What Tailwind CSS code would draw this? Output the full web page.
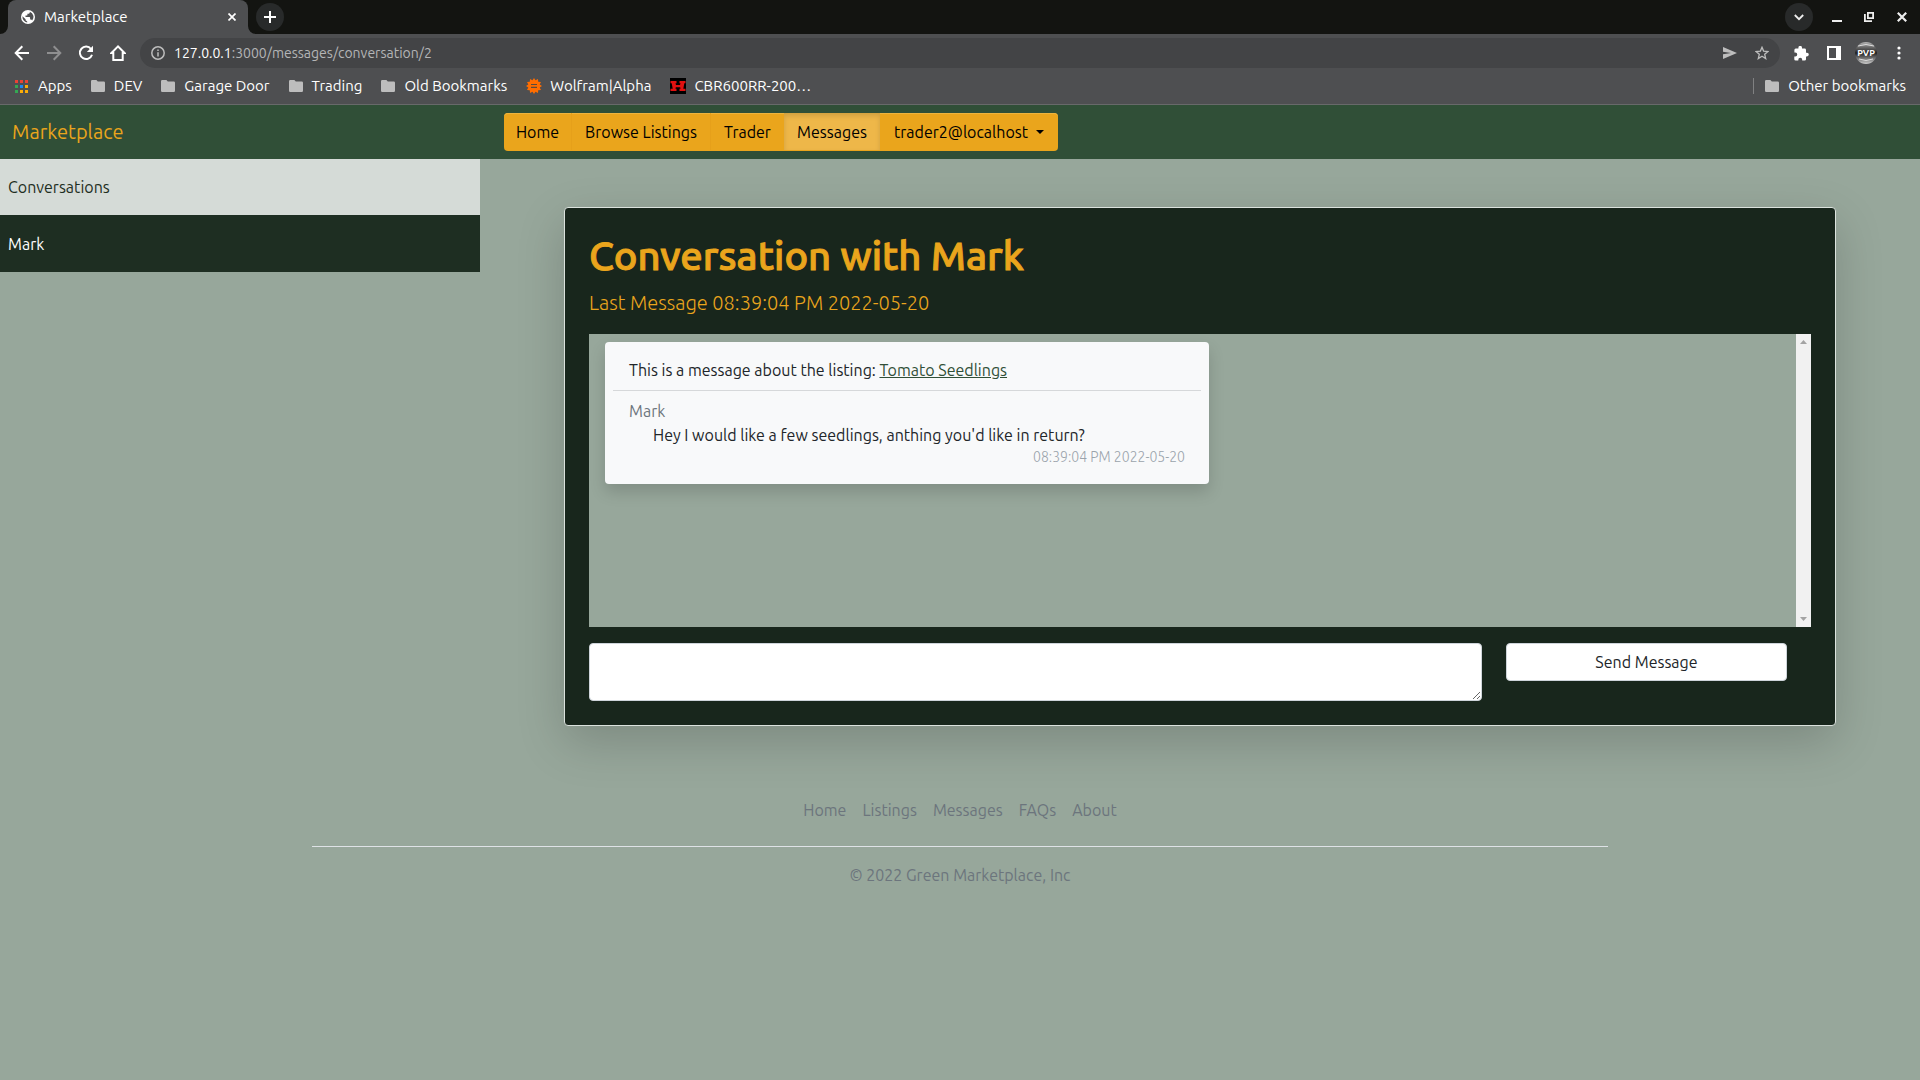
<!DOCTYPE html>
<html lang="en">
<head>
<meta charset="utf-8">
<meta name="viewport" content="width=device-width, initial-scale=1">
<title>Marketplace</title>
<script src="https://cdn.jsdelivr.net/npm/@tailwindcss/browser@4"></script>
</head>
<body class="min-h-screen bg-[#97a79b] font-['Ubuntu','Noto_Sans',sans-serif] text-base leading-6 text-[#212529]">

<svg class="hidden" aria-hidden="true">
  <symbol id="folder" viewBox="0 0 14 12"><path d="M1.200 0H5.400L6.800 1.500H12.800A1.200 1.200 0 0 1 14 2.700V10.800A1.200 1.200 0 0 1 12.800 12H1.200A1.200 1.200 0 0 1 0 10.800V1.200A1.200 1.200 0 0 1 1.200 0Z" fill="#bdbdbd"/></symbol>
</svg>

<!-- Browser window -->
<div class="bg-[#4e4f51] text-[15px] text-white">
  <!-- Tab strip -->
  <div class="flex h-[34px] items-center bg-[#131411]">
    <div class="relative ml-2 flex h-full w-60 items-center rounded-t-lg bg-[#4e4f51] pr-2 pl-[13px]">
      <svg class="absolute bottom-0 -left-2 size-2" viewBox="0 0 8 8" aria-hidden="true"><path d="M8 0V8H0A8 8 0 0 0 8 0Z" fill="#4e4f51"/></svg>
      <svg class="absolute -right-2 bottom-0 size-2" viewBox="0 0 8 8" aria-hidden="true"><path d="M0 0V8H8A8 8 0 0 1 0 0Z" fill="#4e4f51"/></svg>
      <svg class="size-[14px]" viewBox="0 0 14 14" aria-hidden="true"><circle cx="7" cy="7" r="7" fill="#fff"/><path d="M1.500 6.200 4.600 9.200V10.200L6.200 11.600V12.500A5.600 5.600 0 0 1 1.500 6.200ZM8.800 1.700V2.600Q8.800 3.700 7.700 3.700H6.400V5Q6.400 5.600 5.700 5.600H4.500V7H8.400Q9.100 7 9.100 7.700V9.600H9.900Q10.800 9.600 11.100 10.600A5.600 5.600 0 0 0 8.800 1.700Z" fill="#4e4f51"/></svg>
      <span class="ml-[9px] flex-1">Marketplace</span>
      <button aria-label="Close tab" class="flex size-4 items-center justify-center"><svg class="size-2" viewBox="0 0 8 8" stroke="#fff" stroke-width="1.700"><path d="M0.500 0.500 7.500 7.500M7.500 0.500 0.500 7.500"/></svg></button>
    </div>
    <button aria-label="New tab" class="ml-2 flex size-7 items-center justify-center rounded-full bg-[#282a2a]"><svg class="size-3" viewBox="0 0 12 12" stroke="#fff" stroke-width="2"><path d="M6 0V12M0 6H12"/></svg></button>
    <div class="ml-auto flex items-center gap-[19px] pr-[13px]">
      <button aria-label="Search tabs" class="flex size-7 items-center justify-center rounded-full bg-[#282a2a]"><svg class="size-[10px]" viewBox="0 0 10 10" fill="none" stroke="#eee" stroke-width="1.800"><path d="M0.800 3 5 7.200 9.200 3"/></svg></button>
      <button aria-label="Minimize"><svg class="h-[10px] w-[10px]" viewBox="0 0 10 10"><path d="M0 8H10V10H0Z" fill="#eee"/></svg></button>
      <button aria-label="Restore" class="pl-[3px]"><svg class="size-[10px]" viewBox="0 0 10 10" fill="none" stroke="#eee" stroke-width="1.800"><path d="M3.900 0.900H9.100V6.100H3.900ZM0.900 2V9.100H8"/></svg></button>
      <button aria-label="Close window" class="pl-1"><svg class="size-[10px]" viewBox="0 0 10 10" stroke="#eee" stroke-width="2.200"><path d="M0.800 0.800 9.200 9.200M9.200 0.800 0.800 9.200"/></svg></button>
    </div>
  </div>

  <!-- Toolbar -->
  <div class="flex h-[38px] items-center pr-[18px] pl-[14px]">
    <div class="flex items-center gap-4">
      <button aria-label="Back"><svg class="size-4" viewBox="0 0 16 16" fill="none" stroke="#fff" stroke-width="2"><path d="M15 8H2M8.300 1.300 1.700 8 8.300 14.700"/></svg></button>
      <button aria-label="Forward"><svg class="size-4" viewBox="0 0 16 16" fill="none" stroke="#8f8f90" stroke-width="2"><path d="M1 8H14M7.700 1.300 14.300 8 7.700 14.700"/></svg></button>
      <button aria-label="Reload"><svg class="size-4" viewBox="0 0 16 16"><path d="M13 4A6.200 6.200 0 1 0 14 9.700" fill="none" stroke="#fff" stroke-width="2"/><path d="M15 0.800V7H8.800Z" fill="#fff"/></svg></button>
      <button aria-label="Home page"><svg class="size-4" viewBox="0 0 16 16" fill="none" stroke="#fff" stroke-width="2"><path d="M8 1.400 1.500 8H3.300V15H12.700V8H14.500Z"/></svg></button>
    </div>
    <div class="ml-[14px] flex h-[30px] flex-1 items-center rounded-full bg-[#434446] pr-[11px] pl-[11px]">
      <svg class="size-[14px]" viewBox="0 0 14 14" fill="none" stroke="#bdbdbd" stroke-width="1.500" aria-hidden="true"><circle cx="7" cy="7" r="6.200"/><path d="M7 6.200V10.400M7 3.500V5"/></svg>
      <span class="ml-[9px] text-sm text-[#b4b5b6]"><span class="text-white">127.0.0.1</span>:3000/messages/conversation/2</span>
      <button aria-label="Send page" class="ml-auto"><svg class="h-3 w-[14px]" viewBox="0 0 14 12"><path d="M0 0 14 6 0 12V7.300L8 6 0 4.700Z" fill="#bdbdbd"/></svg></button>
      <button aria-label="Bookmark this page" class="ml-[18px]"><svg class="size-[14px]" viewBox="0 0 14 14" fill="none" stroke="#bdbdbd" stroke-width="1.300"><path d="M7 1.300 8.600 5.100 12.900 5.500 9.700 8.300 10.700 12.500 7 10.200 3.300 12.500 4.300 8.300 1.100 5.500 5.400 5.100Z"/></svg></button>
    </div>
    <div class="flex items-center pl-[14px]">
      <button aria-label="Extensions"><svg class="size-[15px]" viewBox="0 0 15 15"><path d="M13 6.800H12V4A1.400 1.400 0 0 0 10.600 2.600H8V1.700A1.800 1.800 0 0 0 4.400 1.700V2.600H1.700A1.400 1.400 0 0 0 0.400 4V6.600H1.300A1.900 1.900 0 0 1 1.300 10.500H0.300V13.200A1.400 1.400 0 0 0 1.700 14.600H4.300V13.700A1.900 1.900 0 0 1 8.200 13.700V14.600H10.600A1.400 1.400 0 0 0 12 13.200V10.400H13A1.800 1.800 0 0 0 13 6.800Z" fill="#fff"/></svg></button>
      <button aria-label="Side panel" class="ml-[18px]"><svg class="size-[14px]" viewBox="0 0 14 14"><path d="M0 0H14V14H0ZM2 2V12H9V2Z" fill="#fff" fill-rule="evenodd"/></svg></button>
      <button aria-label="Profile" class="ml-[14px]"><svg class="size-[22px]" viewBox="0 0 22 22"><defs><clipPath id="round"><circle cx="11" cy="11" r="11"/></clipPath><linearGradient id="metal" x1="0" y1="0" x2="0" y2="1"><stop offset="0" stop-color="#b5b5b5"/><stop offset=".25" stop-color="#666"/><stop offset=".5" stop-color="#222"/><stop offset=".75" stop-color="#777"/><stop offset="1" stop-color="#ccc"/></linearGradient></defs><g clip-path="url(#round)"><path d="M0 0H22V22H0Z" fill="url(#metal)"/><path d="M3 4Q11 1 19 4M4 17Q11 20 18 17" stroke="#ddd" fill="none"/><text x="11" y="14" text-anchor="middle" font-size="9" font-weight="700" fill="#fff">PVP</text></g></svg></button>
      <button aria-label="Browser menu" class="ml-[19px]"><svg class="h-[14px] w-[6px]" viewBox="0 0 6 14" fill="#fff"><circle cx="3" cy="2" r="1.600"/><circle cx="3" cy="7" r="1.600"/><circle cx="3" cy="12" r="1.600"/></svg></button>
    </div>
  </div>

  <!-- Bookmarks bar -->
  <div class="flex h-[33px] items-center gap-[19px] border-b border-[#68696a] pr-[14px] pb-1 pl-[15px]">
    <a href="#" class="flex items-center gap-[10px]"><svg class="size-[13px]" viewBox="0 0 13 13"><path d="M0 0H3V3H0ZM5 0H8V3H5ZM10 0H13V3H10Z" fill="#ea4335"/><path d="M0 5H3V8H0ZM0 10H3V13H0Z" fill="#34a853"/><path d="M5 5H8V8H5Z" fill="#1e88f5"/><path d="M10 5H13V8H10ZM5 10H8V13H5ZM10 10H13V13H10Z" fill="#fbac08"/></svg>Apps</a>
    <a href="#" class="flex items-center gap-[9px]"><svg class="h-3 w-[14px]"><use href="#folder"/></svg>DEV</a>
    <a href="#" class="flex items-center gap-[9px]"><svg class="h-3 w-[14px]"><use href="#folder"/></svg>Garage Door</a>
    <a href="#" class="flex items-center gap-[9px]"><svg class="h-3 w-[14px]"><use href="#folder"/></svg>Trading</a>
    <a href="#" class="flex items-center gap-[9px]"><svg class="h-3 w-[14px]"><use href="#folder"/></svg>Old Bookmarks</a>
    <a href="#" class="flex items-center gap-2"><svg class="size-4" viewBox="0 0 16 16"><path d="M8 0 9.500 2.300 12 1 12.200 3.800 15 4 13.700 6.500 16 8 13.700 9.500 15 12 12.200 12.200 12 15 9.500 13.700 8 16 6.500 13.700 4 15 3.800 12.200 1 12 2.300 9.500 0 8 2.300 6.500 1 4 3.800 3.800 4 1 6.500 2.300Z" fill="#ff6d00"/><path d="M5 6.500H11M5 9.300H11" stroke="#5a4a3c" stroke-width="1.200"/></svg>Wolfram|Alpha</a>
    <a href="#" class="flex items-center gap-2"><svg class="size-4" viewBox="0 0 16 16"><path d="M0 0H16V16H0Z" fill="#000"/><path d="M0.500 3H6.500V5.200H5.500L6 7H10L10.500 5.200H9.500V3H15.500V5.200H14.300L13.300 10.800H15.500V13H9.500V10.800H10.500L10.200 9.300H5.800L5.500 10.800H6.500V13H0.500V10.800H2.700L1.700 5.200H0.500Z" fill="#e01010"/></svg>CBR600RR-200…</a>
    <a href="#" class="ml-auto flex items-center gap-[9px] border-l border-[#808182] pl-[11px] leading-4"><svg class="h-3 w-[14px]"><use href="#folder"/></svg>Other bookmarks</a>
  </div>
</div>

<!-- Site header -->
<header class="flex h-[54px] items-center bg-[#304f37]">
  <a href="#" class="w-[504px] pl-3 text-xl text-[#eaa51c]">Marketplace</a>
  <nav class="flex h-[38px] overflow-hidden rounded bg-[#eaa51c] pb-px text-black shadow-[inset_0_1px_0_#edb43e]">
    <a href="#" class="flex w-[68px] items-center justify-center border-r border-[#e6a01a]">Home</a>
    <a href="#" class="flex w-[139px] items-center justify-center border-r border-[#e6a01a]">Browse Listings</a>
    <a href="#" class="flex w-[73px] items-center justify-center">Trader</a>
    <a href="#" aria-current="page" class="flex w-24 items-center justify-center bg-[#eeb749] shadow-[inset_0_3px_5px_rgba(0,0,0,0.125)]">Messages</a>
    <button class="flex w-[178px] items-center justify-center gap-2">trader2@localhost<svg class="h-1 w-2" viewBox="0 0 8 4" aria-hidden="true"><path d="M0 0H8L4 4Z" fill="#000"/></svg></button>
  </nav>
</header>

<div class="flex items-start">
  <aside class="w-1/4">
    <h2 class="bg-[#d5dbd7] px-2 py-4 text-[#1e2e22]">Conversations</h2>
    <a href="#" class="block border-t border-[#1e2e22] bg-[#1e2e22] px-2 py-4 text-white">Mark</a>
  </aside>

  <main class="w-3/4 px-[84px] py-12">
    <section class="rounded border border-[#dbe2dd] bg-[#18261c] p-6 shadow-[0_16px_48px_rgba(0,0,0,0.175)]">
      <h1 class="mb-2 text-[40px] leading-12 font-medium text-[#eaa51c] [-webkit-text-stroke:1px_#eaa51c]">Conversation with Mark</h1>
      <p class="mb-4 text-xl leading-[30px] font-light text-[#eaa51c]">Last Message 08:39:04 PM 2022-05-20</p>

      <div class="mb-4 flex h-[293px] bg-[#97a79b]">
        <div class="flex-1 py-2 pl-4">
          <article class="w-[604px] rounded bg-[#f8f9fa] p-2 pb-4 shadow-[0_8px_16px_rgba(0,0,0,0.15)]">
            <p class="border-b border-[#d6d8da] px-4 py-2">This is a message about the listing: <a href="#" class="text-[#304f37] underline">Tomato Seedlings</a></p>
            <div class="px-4 pt-2">
              <p class="text-[#6c757d]">Mark</p>
              <p class="pl-6">Hey I would like a few seedlings, anthing you'd like in return?</p>
              <p class="text-right text-sm leading-[21px] font-light text-[#9aa3ab]">08:39:04 PM 2022-05-20</p>
            </div>
          </article>
        </div>
        <div class="flex w-[15px] flex-col items-center justify-between bg-[#f1f1f1] py-[6px]" aria-hidden="true">
          <svg class="h-1 w-[7px]" viewBox="0 0 7 4"><path d="M0 4 3.500 0 7 4Z" fill="#a3a3a3"/></svg>
          <svg class="h-1 w-[7px]" viewBox="0 0 7 4"><path d="M0 0 3.500 4 7 0Z" fill="#a3a3a3"/></svg>
        </div>
      </div>

      <form class="flex items-start gap-6 pr-6">
        <textarea aria-label="Message" class="block h-[58px] min-w-0 flex-1 rounded border border-[#ced4da] bg-white px-3 py-1"></textarea>
        <button type="button" class="h-[38px] w-[281px] rounded border border-[#ced4da] bg-white">Send Message</button>
      </form>
    </section>
  </main>
</div>

<footer class="mx-auto max-w-[1296px] py-4 text-center text-[#6c757d]">
  <nav class="mb-4 flex justify-center gap-4 border-b border-[#dee2e6] pt-2 pb-6">
    <a href="#">Home</a>
    <a href="#">Listings</a>
    <a href="#">Messages</a>
    <a href="#">FAQs</a>
    <a href="#">About</a>
  </nav>
  <p>© 2022 Green Marketplace, Inc</p>
</footer>
</body>
</html>
